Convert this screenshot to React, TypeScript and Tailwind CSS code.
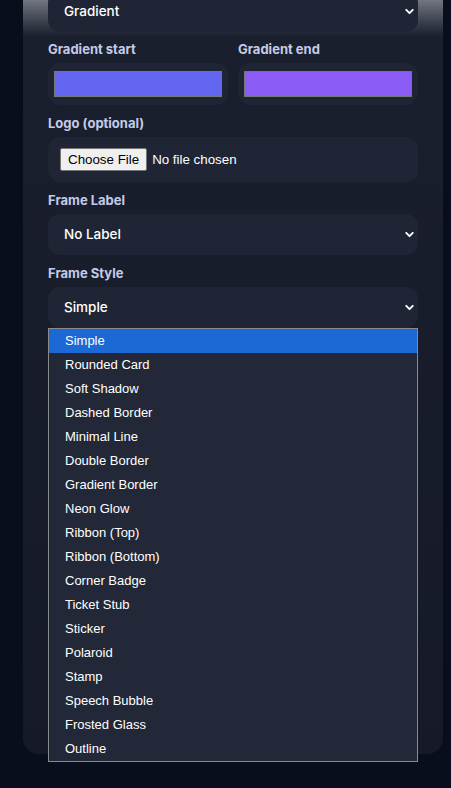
import { ChevronDown } from 'lucide-react';

const styles = [
  'Simple',
  'Rounded Card',
  'Soft Shadow',
  'Dashed Border',
  'Minimal Line',
  'Double Border',
  'Gradient Border',
  'Neon Glow',
  'Ribbon (Top)',
  'Ribbon (Bottom)',
  'Corner Badge',
  'Ticket Stub',
  'Sticker',
  'Polaroid',
  'Stamp',
  'Speech Bubble',
  'Frosted Glass',
  'Outline',
];

function Label({ children }: { children: React.ReactNode }) {
  return <div className="mb-1 text-[13px] font-bold leading-5 text-[#c4cbe9]">{children}</div>;
}

function Select({ value }: { value: string }) {
  return (
    <div className="flex h-[41px] items-center justify-between rounded-xl bg-[#1f2535] pl-4 pr-[2px] text-[13.5px] font-medium text-white">
      <span>{value}</span>
      <ChevronDown className="h-[13px] w-[13px]" strokeWidth={3.5} />
    </div>
  );
}

export default function App() {
  return (
    <div className="min-h-[788px] overflow-hidden bg-[#090e1d] font-['Inter',sans-serif]">
      <div className="-mt-[9px] ml-[23px] w-[420px] rounded-b-2xl bg-gradient-to-b from-[#8a8e98] via-[#1a1f2d] via-[6%] to-[#161a28] px-[25px] pb-[426px]">
        <Select value="Gradient" />

        <div className="mt-[7px] grid grid-cols-2 gap-[10px]">
          <div>
            <Label>Gradient start</Label>
            <div className="rounded-xl bg-[#1f2535] px-[6px] py-2">
              <div className="h-[26px] border border-[#777] bg-[#6366f1]" />
            </div>
          </div>
          <div>
            <Label>Gradient end</Label>
            <div className="rounded-xl bg-[#1f2535] px-[6px] py-2">
              <div className="h-[26px] border border-[#777] bg-[#8b5cf6]" />
            </div>
          </div>
        </div>

        <div className="mt-[8px]">
          <Label>Logo (optional)</Label>
          <div className="flex h-[45px] items-center rounded-xl bg-[#1f2535] px-3 font-['Liberation_Sans',sans-serif] text-[13.33px] text-white">
            <span className="mr-[5px] rounded-[2px] border border-[#767676] bg-[#efefef] px-[7px] py-[1px] text-black">
              Choose File
            </span>
            No file chosen
          </div>
        </div>

        <div className="mt-2">
          <Label>Frame Label</Label>
          <Select value="No Label" />
        </div>

        <div className="relative mt-2">
          <Label>Frame Style</Label>
          <Select value="Simple" />
          <div className="absolute left-0 right-0 top-full z-10 border border-[#8a8a8a] bg-[#222838] font-['Liberation_Sans',sans-serif] text-[13px] text-white">
            {styles.map((s, i) => (
              <div
                key={s}
                className={`flex h-6 items-center pl-4 ${i === 0 ? 'bg-[#1c69d6]' : ''}`}
              >
                {s}
              </div>
            ))}
          </div>
        </div>
      </div>
    </div>
  );
}
